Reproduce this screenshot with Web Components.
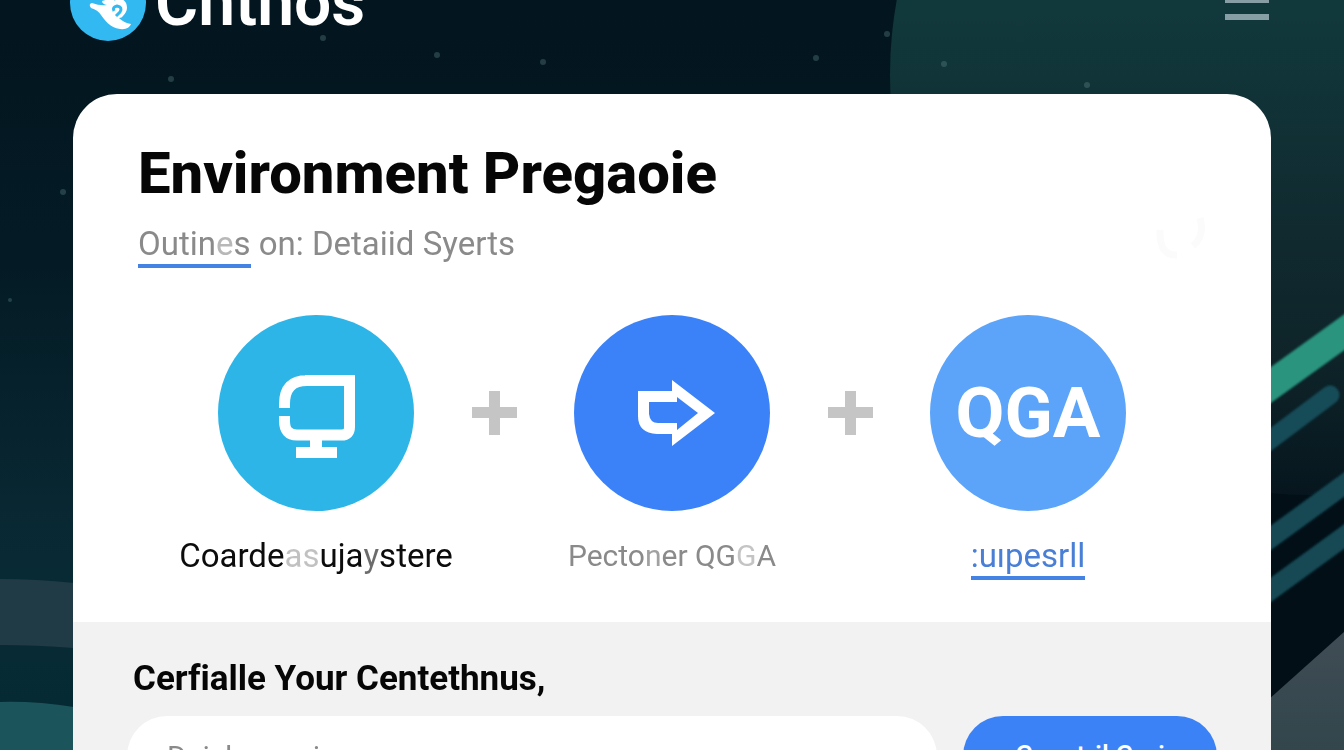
<!DOCTYPE html>
<html lang="en">
<head>
<meta charset="utf-8">
<title>Chthos</title>
<meta name="viewport" content="width=device-width, initial-scale=1">
<style>
  html { background: #03141d; }
  body { margin: 0; overflow: hidden; height: 100vh; font-family: Roboto, "Liberation Sans", sans-serif; color: #060606; }
</style>
</head>
<body>
<ch-page>
  <ch-header slot="header">Chthos</ch-header>
  <ch-card>
    <h1 slot="title">Environment Pregaoie</h1>
    <ch-subtitle slot="subtitle"></ch-subtitle>
    <ch-steps slot="steps">
      <ch-step tone="cyan">
        <ch-icon name="monitor" slot="icon"></ch-icon>
        Coarde<ch-fade level="strong">as</ch-fade>uja<ch-fade>y</ch-fade>stere
      </ch-step>
      <ch-plus></ch-plus>
      <ch-step tone="blue">
        <ch-icon name="arrow" slot="icon"></ch-icon>
        Pecto<ch-fade level="light">n</ch-fade>er QG<ch-fade level="mid">G</ch-fade>A
      </ch-step>
      <ch-plus></ch-plus>
      <ch-step tone="sky" href="#step">
        <span slot="icon">QGA</span>
        :uıpesrll
      </ch-step>
    </ch-steps>
    <ch-signup slot="footer"></ch-signup>
  </ch-card>
</ch-page>

<script>
const define = (name, html, setup) => {
  const template = document.createElement('template');
  template.innerHTML = html;
  customElements.define(name, class extends HTMLElement {
    constructor() {
      super();
      this.attachShadow({ mode: 'open' }).append(template.content.cloneNode(true));
    }
    connectedCallback() { if (setup) setup(this, this.shadowRoot); }
  });
};

define('ch-backdrop', `
  <style>
    :host { display: block; position: fixed; inset: 0; z-index: -1; }
    svg { display: block; width: 100%; height: 100%; }
  </style>
  <svg viewBox="0 0 1344 750" preserveAspectRatio="xMidYMid slice" aria-hidden="true">
    <defs>
      <linearGradient id="base" x1="0" y1="0" x2="0" y2="1">
        <stop offset="0" stop-color="#03151f"/><stop offset=".35" stop-color="#041b25"/>
        <stop offset=".75" stop-color="#092a35"/><stop offset="1" stop-color="#052a34"/>
      </linearGradient>
      <linearGradient id="planet" gradientUnits="userSpaceOnUse" x1="0" y1="0" x2="0" y2="495">
        <stop offset="0" stop-color="#11393c"/><stop offset=".5" stop-color="#10292f"/>
        <stop offset=".72" stop-color="#0e2429"/><stop offset="1" stop-color="#07161e"/>
      </linearGradient>
      <linearGradient id="rock" x1="0" y1="0" x2="0" y2="1">
        <stop offset="0" stop-color="#404c55"/><stop offset="1" stop-color="#32464c"/>
      </linearGradient>
      <filter id="soft" x="-20%" y="-20%" width="140%" height="140%"><feGaussianBlur stdDeviation="1"/></filter>
    </defs>
    <rect width="1344" height="750" fill="url(#base)"/>
    <rect x="700" y="110" width="644" height="640" fill="#020f17"/>
    <circle cx="1310" cy="75" r="420" fill="url(#planet)"/>
    <path d="M0 579Q36 579 74 583V648Q36 645 0 645Z" fill="#213b46"/>
    <path d="M0 702Q36 701 74 707V750H0Z" fill="#1b545b"/>
    <g filter="url(#soft)">
      <path d="M1250 382L1360 303V339L1250 418Z" fill="#29947f"/>
      <path d="M1250 455L1330 395" stroke="#134b58" stroke-width="19" stroke-linecap="round"/>
      <path d="M1250 553L1360 473M1250 605L1360 525" stroke="#124853" stroke-width="20"/>
    </g>
    <path d="M1250 716L1344 632V750H1250Z" fill="url(#rock)"/>
    <g fill="#6f979b" opacity=".3">
      <circle cx="323" cy="38" r="3"/><circle cx="437" cy="55" r="3"/><circle cx="171" cy="79" r="3"/>
      <circle cx="63" cy="192" r="3"/><circle cx="887" cy="34" r="3"/><circle cx="944" cy="64" r="3"/>
      <circle cx="1087" cy="85" r="3"/><circle cx="10" cy="300" r="2"/><circle cx="816" cy="58" r="3"/>
      <circle cx="543" cy="62" r="3"/>
    </g>
  </svg>`);

define('ch-page', `
  <style>
    :host { display: block; position: relative; min-height: 100vh; padding: 0 73px; box-sizing: border-box; z-index: 0; }
  </style>
  <ch-backdrop></ch-backdrop>
  <slot name="header"></slot>
  <slot></slot>`);

define('ch-header', `
  <style>
    :host { display: flex; align-items: center; justify-content: space-between; height: 78px; margin: -36px 0 52px; }
    a { display: flex; align-items: center; gap: 8px; margin-left: -4px; color: #fff; text-decoration: none;
        font-size: 66px; line-height: 76px; font-weight: 600; }
    svg { display: block; }
    button { display: grid; gap: 11px; width: 44px; margin: 0 2px 6px 0; padding: 0; border: 0; background: none; }
    i { display: block; height: 6px; background: #879fa4; }
  </style>
  <a href="#home">
    <svg width="78" height="78" viewBox="0 0 78 78" aria-hidden="true">
      <circle cx="39" cy="39" r="38" fill="#33b9f1"/>
      <path d="M40 26H52Q48 33 45 37Q53 32 57 39Q60 46 54 52Q53 54 50 54Q55 59 62 60Q60 66 51 65C41 64 35 55 32 51Q29 46 22 44Q19 40 23 39Q31 42 38 41Q33 40 33 37Q39 36 40 32Z" fill="#fff"/>
      <path d="M45 47Q43 43 48 42Q54 43 51 48Q49 50 47 52" fill="none" stroke="#33b9f1" stroke-width="3"/>
    </svg>
    <slot></slot>
  </a>
  <button type="button" aria-label="Menu"><i></i><i></i><i></i></button>`);

define('ch-card', `
  <style>
    :host { display: block; position: relative; background: #fff; border-radius: 44px; overflow: hidden; }
    .intro { padding: 48px 65px 0; }
    ::slotted(h1) { margin: 0; font-size: 58px; line-height: 62px; font-weight: 800; }
    svg { position: absolute; top: 120px; right: 64px; }
  </style>
  <svg width="52" height="50" aria-hidden="true"><path d="M5 16Q4 42 22 41M38 32Q50 22 45 4" fill="none" stroke="#fbfbfb" stroke-width="7"/></svg>
  <div class="intro">
    <slot name="title"></slot>
    <slot name="subtitle"></slot>
  </div>
  <slot name="steps"></slot>
  <slot name="footer"></slot>`);

define('ch-fade', `
  <style>
    :host { display: inline-block; opacity: .6; }
    :host([level="light"]) { opacity: .8; }
    :host([level="mid"]) { opacity: .5; }
    :host([level="strong"]) { opacity: .25; }
  </style><slot></slot>`);

define('ch-subtitle', `
  <style>
    :host { display: block; margin-top: 20px; }
    p { margin: 0; font-size: 33px; line-height: 40px; color: #8a8a8a; }
    a { display: inline-block; height: 40px; border-bottom: 4px solid #4482e4; color: inherit; text-decoration: none; }
  </style>
  <p><a href="#outines">Outin<ch-fade>e</ch-fade>s</a> on: Detaiid Syerts</p>`);

define('ch-steps', `
  <style>
    :host { display: flex; justify-content: center; gap: 20px; margin-top: 47px; height: 307px; }
  </style><slot></slot>`);

define('ch-plus', `
  <style>
    :host { display: flex; align-items: center; height: 196px; }
    svg { display: block; }
  </style>
  <svg width="45" height="44" viewBox="0 0 45 44" aria-hidden="true"><path d="M17 0h11v16h17v11H28v17H17V27H0V16h17Z" fill="#c5c5c5"/></svg>`);

define('ch-step', `
  <style>
    :host { display: flex; flex-direction: column; align-items: center; width: 271px; }
    .disc { display: grid; place-items: center; width: 196px; height: 196px; border-radius: 50%; background: #2db5e8;
            color: #fff; font-size: 71px; line-height: 80px; font-weight: 700; }
    :host([tone="blue"]) .disc { background: #3b82f8; }
    :host([tone="sky"]) .disc { background: #5ba4f9; }
    .label { margin-top: 25px; font-size: 33px; line-height: 40px; white-space: nowrap; color: #0c0c0c; }
    :host([tone="blue"]) .label { color: #8a8a8a; font-size: 30px; }
    a.label { height: 40px; border-bottom: 4px solid #4482e4; color: #4a7fd6; text-decoration: none; }
  </style>
  <div class="disc"><slot name="icon"></slot></div>
  <span class="label"><slot></slot></span>`,
  (host, root) => {
    if (!host.hasAttribute('href')) return;
    const link = document.createElement('a');
    link.className = 'label';
    link.href = host.getAttribute('href');
    link.append(document.createElement('slot'));
    root.querySelector('.label').replaceWith(link);
  });

const icons = {
  monitor: `<g transform="translate(1 4)"><path d="M26 5.500H70.500V52Q70.500 60 62.500 60H18Q5.500 60 5.500 46V41M5.500 33V29Q5.500 5.500 28 5.500H70.500" stroke="#fff" stroke-width="11" fill="none"/>
    <path d="M31 65H43V72H58V83H17V72H31Z" fill="#fff"/></g>`,
  arrow: `<g transform="translate(4 2)"><path fill-rule="evenodd" d="M0 18H34V7L77 40L34 73V61H19Q0 60 0 43ZM11 29V41Q12 50 20 50H39V57L60 40L39 24V29Z" fill="#fff"/></g>`
};
define('ch-icon', `
  <style>:host, svg { display: block; overflow: visible; }</style>
  <svg width="76" height="84" viewBox="0 0 76 84" aria-hidden="true"></svg>`,
  (host, root) => { root.querySelector('svg').innerHTML = icons[host.getAttribute('name')]; });

define('ch-signup', `
  <style>
    :host { display: block; padding: 36px 54px 60px; background: #f2f2f2; }
    label { display: block; margin-left: 6px; font-size: 35px; line-height: 42px; font-weight: 700; font-variant-ligatures: none; }
    form { display: flex; gap: 26px; margin-top: 16px; }
    input, button { box-sizing: border-box; height: 80px; border: 0; border-radius: 40px; font: 30px/40px Roboto, "Liberation Sans", sans-serif; }
    input { flex: 1; min-width: 0; padding: 0 40px; background: #fff; }
    input::placeholder { color: #8a8a8a; opacity: 1; }
    button { width: 254px; padding: 0; background: #3b82f6; color: #fff; font-size: 27px; font-weight: 500; }
  </style>
  <label for="entry">Cerfialle Your Centethnus,</label>
  <form>
    <input id="entry" type="text" placeholder="Deish caesios">
    <button type="button">Coestril Cori</button>
  </form>`);
</script>
</body>
</html>
